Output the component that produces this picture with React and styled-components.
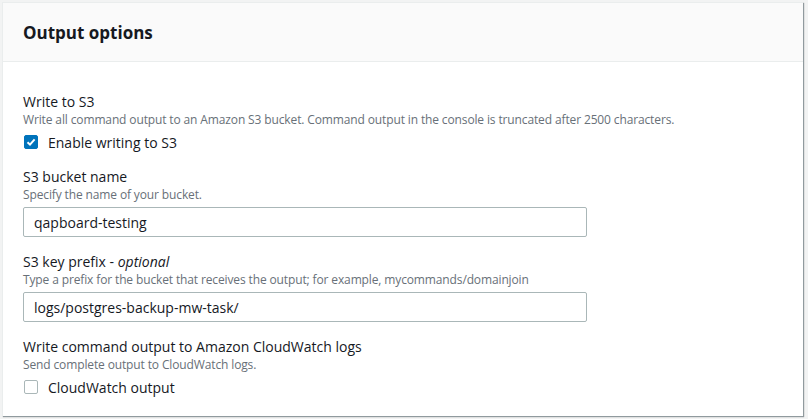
import styled, { createGlobalStyle } from "styled-components";

const GlobalStyle = createGlobalStyle`
  html, body {
    margin: 0;
    padding: 0;
    background: #f2f3f3;
    font-family: "Open Sans", "Liberation Sans", sans-serif;
    color: #16191f;
  }
`;

const Page = styled.div`
  padding: 2px 5px 3px 2px;
`;

const Card = styled.section`
  background: #ffffff;
  border-left: 1px solid #eaeded;
  border-top: 1px solid #eaeded;
  box-shadow: 1px 1px 1px 0 rgba(0, 28, 36, 0.3), 1px 1px 1px 0 rgba(0, 28, 36, 0.15);
  height: 414px;
  box-sizing: border-box;
`;

const Header = styled.header`
  background: #fafafa;
  border-bottom: 1px solid #eaeded;
  height: 59px;
  box-sizing: border-box;
  padding: 2px 20px 0 20px;
  display: flex;
  align-items: center;
`;

const Title = styled.h2`
  margin: 0;
  font-size: 17px;
  font-weight: 700;
  line-height: 22px;
  color: #16191f;
`;

const Body = styled.div`
  padding: 30px 20px 0 20px;
  display: flex;
  flex-direction: column;
  gap: 15px;
`;

const Field = styled.div`
  display: flex;
  flex-direction: column;
`;

const Label = styled.div`
  font-size: 14px;
  line-height: 20px;
  color: #16191f;
`;

const Optional = styled.i`
  font-style: italic;
`;

const Description = styled.div`
  font-size: 12px;
  line-height: 16px;
  letter-spacing: -0.13px;
  color: #687078;
  margin: 0 0 4px 0;
`;

const CheckRow = styled.label`
  display: flex;
  align-items: center;
  gap: 10px;
  height: 20px;
  font-size: 14px;
  color: #16191f;
`;

const Box = styled.span`
  width: 14px;
  height: 14px;
  box-sizing: border-box;
  border-radius: 2px;
  display: flex;
  align-items: center;
  justify-content: center;
  margin-left: 1px;
  background: ${(p) => (p.$checked ? "#0073bb" : "#ffffff")};
  border: 1px solid ${(p) => (p.$checked ? "#0073bb" : "#aab7b8")};
`;

const Input = styled.input`
  width: 564px;
  height: 30px;
  box-sizing: border-box;
  border: 1px solid #aab7b8;
  border-radius: 2px;
  padding: 4px 10px;
  font-family: inherit;
  font-size: 14px;
  color: #16191f;
  outline: none;
`;

const Checkbox = ({ checked, children }) => (
  <CheckRow>
    <Box $checked={checked}>
      {checked && (
        <svg width="10" height="10" viewBox="0 0 10 10">
          <path d="M1.5 5.2 L4 7.6 L8.6 2.4" fill="none" stroke="#fff" strokeWidth="2" />
        </svg>
      )}
    </Box>
    {children}
  </CheckRow>
);

export default function App() {
  return (
    <Page>
      <GlobalStyle />
      <Card>
        <Header>
          <Title>Output options</Title>
        </Header>
        <Body>
          <Field>
            <Label>Write to S3</Label>
            <Description>
              Write all command output to an Amazon S3 bucket. Command output in the console is truncated after 2500 characters.
            </Description>
            <Checkbox checked>Enable writing to S3</Checkbox>
          </Field>
          <Field>
            <Label>S3 bucket name</Label>
            <Description>Specify the name of your bucket.</Description>
            <Input defaultValue="qapboard-testing" />
          </Field>
          <Field>
            <Label>
              S3 key prefix - <Optional>optional</Optional>
            </Label>
            <Description>
              Type a prefix for the bucket that receives the output; for example, mycommands/domainjoin
            </Description>
            <Input defaultValue="logs/postgres-backup-mw-task/" />
          </Field>
          <Field>
            <Label>Write command output to Amazon CloudWatch logs</Label>
            <Description>Send complete output to CloudWatch logs.</Description>
            <Checkbox>CloudWatch output</Checkbox>
          </Field>
        </Body>
      </Card>
    </Page>
  );
}
